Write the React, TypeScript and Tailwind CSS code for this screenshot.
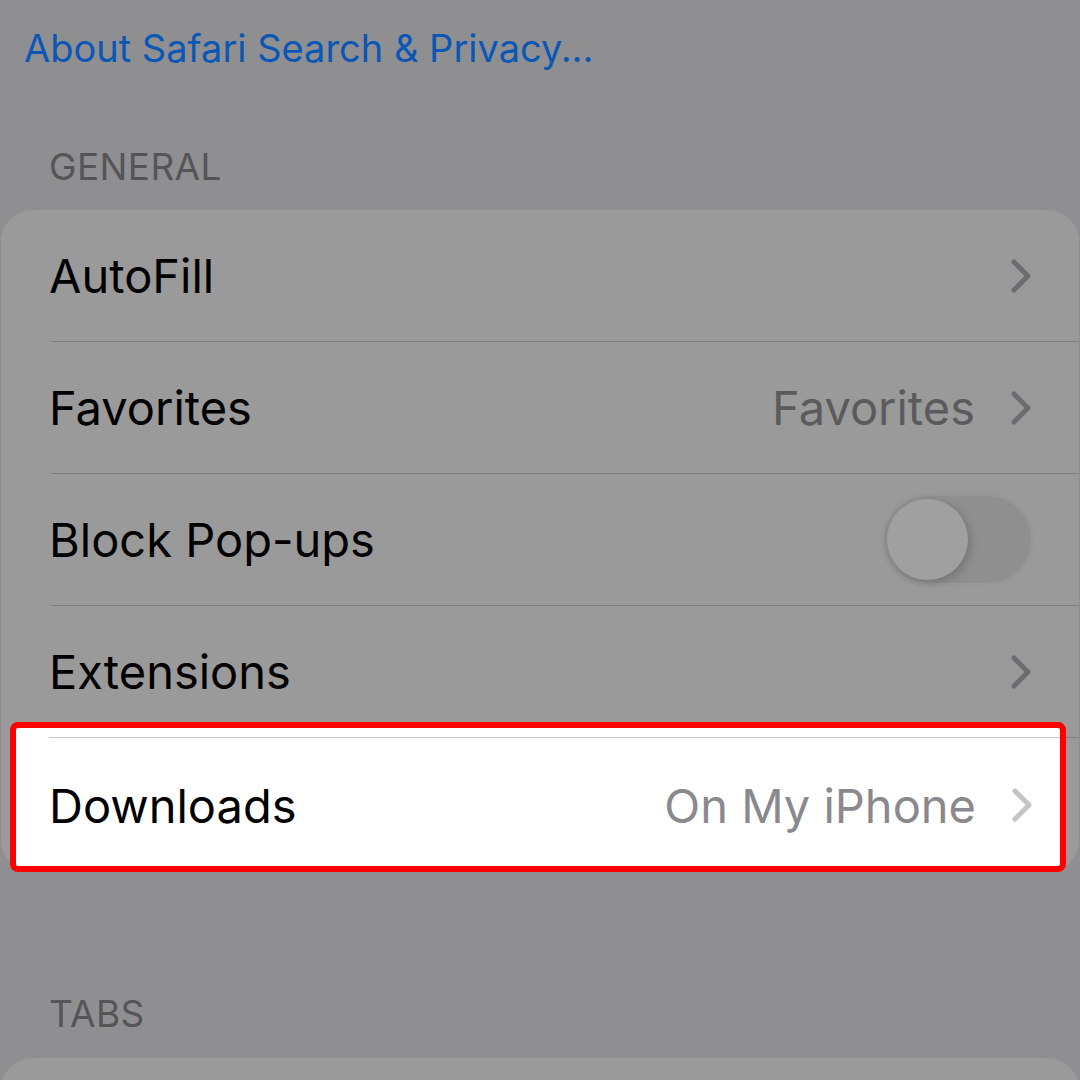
import type { ReactNode } from 'react';

const font = { fontFamily: 'Inter, "Noto Sans", sans-serif' };

function Chevron({ light = false }: { light?: boolean }) {
  return (
    <svg width="22" height="36" viewBox="0 0 22 36" className="shrink-0">
      <path
        d="M4 4 L18 18 L4 32"
        fill="none"
        stroke={light ? '#c5c5c8' : '#6d6d70'}
        strokeWidth="5"
        strokeLinecap="round"
        strokeLinejoin="round"
      />
    </svg>
  );
}

function Toggle() {
  return (
    <div className="relative -mr-[2px] h-[93px] w-[153px] shrink-0 rounded-full border-[3px] border-[#979797] bg-[#8f8f8f]">
      <div className="absolute left-[3px] top-[3px] h-[81px] w-[81px] rounded-full bg-[#a0a0a0] shadow-[3px_3px_8px_rgba(0,0,0,0.18)]" />
    </div>
  );
}

function Row({ label, children }: { label: string; children?: ReactNode }) {
  return (
    <div className="pl-[50px]">
      <div className="flex h-[132px] items-center border-b border-[#7f7f81] pr-[47px]">
        <span className="-ml-[2px] flex-1 text-[47px] leading-none text-black">{label}</span>
        {children}
      </div>
    </div>
  );
}

export default function App() {
  return (
    <div className="h-[1080px] w-[1080px] overflow-hidden bg-[#8f8f92]" style={font}>
      <div className="flex h-[96px] items-center pl-[24px]">
        <span className="text-[38px] leading-none text-[#0b57b6]">About Safari Search &amp; Privacy...</span>
      </div>

      {/* General */}
      <div className="flex h-[114px] items-end pb-[25px] pl-[49px]">
        <span className="text-[37px] leading-none tracking-[0.01em] text-[#555557]">GENERAL</span>
      </div>

      <div className="mx-[1px] rounded-[32px] bg-[#9a9a9a]">
        <Row label="AutoFill">
          <Chevron />
        </Row>
        <Row label="Favorites">
          <span className="mr-[35px] text-[47px] leading-none text-[#5b5b5e]">Favorites</span>
          <Chevron />
        </Row>
        <Row label="Block Pop-ups">
          <Toggle />
        </Row>
        <Row label="Extensions">
          <Chevron />
        </Row>

        {/* highlighted row */}
        <div className="relative z-10 -mb-[2px] -mt-[16px] ml-[9px] mr-[13px] rounded-[8px] border-[6px] border-[#ff0000] bg-white">
          <div className="ml-[33px] mt-[9px] h-px bg-[#c8c8ca]" />
          <div className="flex h-[128px] items-center pl-[33px] pr-[27px] pt-[6px]">
            <span className="flex-1 text-[47px] leading-none text-black">Downloads</span>
            <span className="mr-[35px] text-[47px] leading-none text-[#8a8a8e]">On My iPhone</span>
            <Chevron light />
          </div>
        </div>
      </div>

      {/* Tabs */}
      <div className="flex h-[188px] items-end pb-[26px] pl-[49px]">
        <span className="text-[37px] leading-none tracking-[0.01em] text-[#555557]">TABS</span>
      </div>
      <div className="mx-[1px] h-[132px] rounded-[32px] bg-[#9a9a9a]" />
    </div>
  );
}
